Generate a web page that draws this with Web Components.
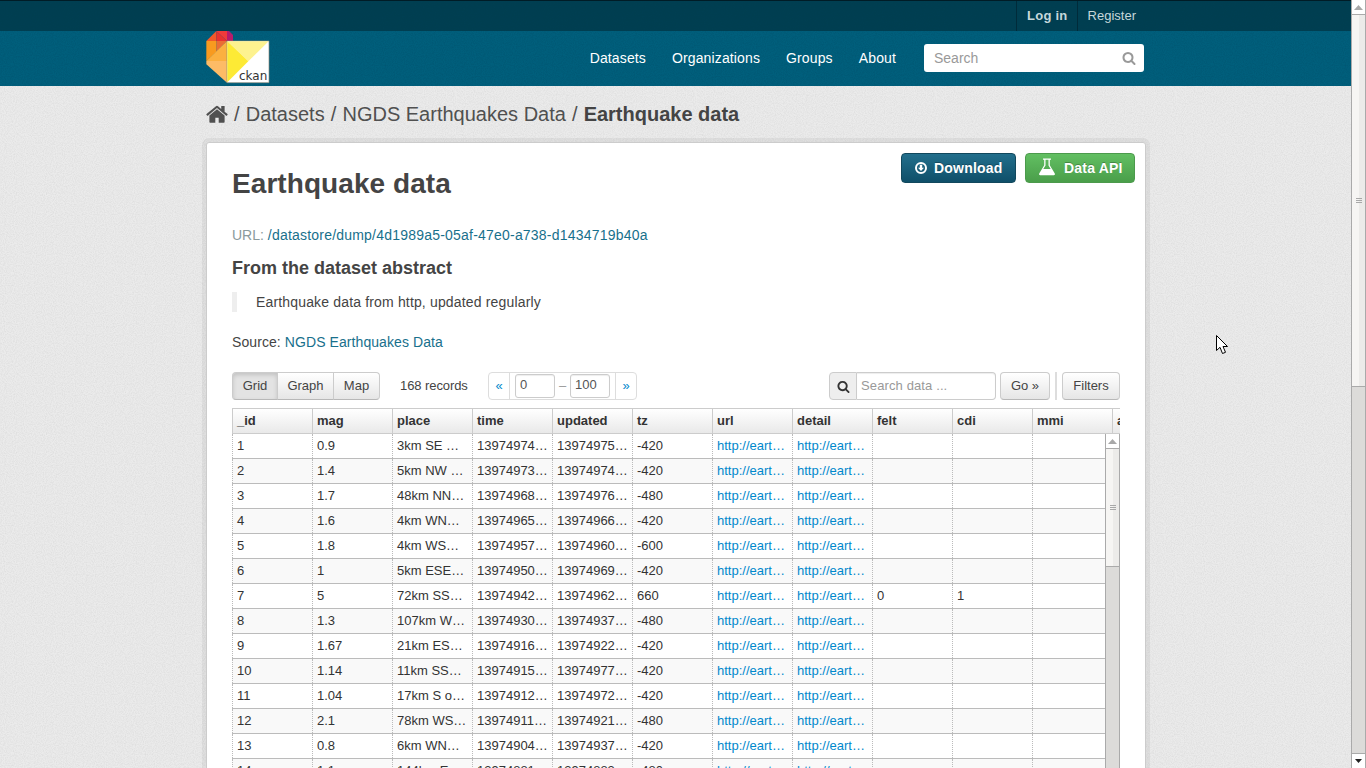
<!DOCTYPE html>
<html lang="en">
<head>
<meta charset="utf-8">
<title>Earthquake data</title>
<style>
html,body {margin:0; height:100%; overflow:hidden;}
body {
    font:14px/20px "Liberation Sans", Arial, sans-serif; color:#444;
    --noise:url("data:image/svg+xml,%3Csvg xmlns='http://www.w3.org/2000/svg' width='240' height='240'%3E%3Cfilter id='n'%3E%3CfeTurbulence type='fractalNoise' baseFrequency='.9' numOctaves='2'/%3E%3CfeColorMatrix values='0 0 0 0 .5 0 0 0 0 .5 0 0 0 0 .5 0 0 0 .5 -.17'/%3E%3C/filter%3E%3Crect width='240' height='240' filter='url(%23n)'/%3E%3C/svg%3E");
    --noise-dark:url("data:image/svg+xml,%3Csvg xmlns='http://www.w3.org/2000/svg' width='240' height='240'%3E%3Cfilter id='n'%3E%3CfeTurbulence type='fractalNoise' baseFrequency='.9' numOctaves='2'/%3E%3CfeColorMatrix values='0 0 0 0 0 0 0 0 0 .05 0 0 0 0 .1 0 0 0 .4 -.12'/%3E%3C/filter%3E%3Crect width='240' height='240' filter='url(%23n)'/%3E%3C/svg%3E");
}
</style>
</head>
<body>
<page-shell>
    <account-bar></account-bar>
    <site-nav></site-nav>
    <bread-crumbs></bread-crumbs>
    <resource-panel>
        <recline-toolbar></recline-toolbar>
        <recline-grid></recline-grid>
    </resource-panel>
</page-shell>
<script>
const ICON = {
    home: `<svg viewBox="0 128 1664 1408" fill="currentColor"><path d="M1408 992v480q0 26-19 45t-45 19h-384v-384h-256v384h-384q-26 0-45-19t-19-45v-480q0-1 .5-3t.5-3l575-474 575 474q1 2 1 6zm223-69l-62 74q-8 9-21 11h-3q-13 0-21-7l-692-577-692 577q-12 8-24 7-13-2-21-11l-62-74q-8-10-7-23.500t11-21.500l719-599q32-26 76-26t76 26l244 204v-195q0-14 9-23t23-9h192q14 0 23 9t9 23v408l219 182q10 8 11 21.500t-7 23.500z"/></svg>`,
    search: `<svg viewBox="0 0 1792 1792" fill="currentColor"><path d="M1216 832q0-185-131.500-316.500t-316.500-131.500-316.500 131.500-131.500 316.500 131.500 316.500 316.500 131.500 316.500-131.500 131.500-316.500zm512 832q0 52-38 90t-90 38q-54 0-90-38l-343-342q-179 124-399 124-143 0-273.500-55.500t-225-150-150-225-55.500-273.500 55.500-273.500 150-225 225-150 273.500-55.500 273.500 55.500 225 150 150 225 55.500 273.500q0 220-124 399l343 343q37 37 37 90z"/></svg>`,
    download: `<svg viewBox="0 0 14 14"><circle cx="7" cy="7" r="5" fill="none" stroke="#fff" stroke-width="2"/><path d="M5.800 3.800h2.400v3h1.800L7 10 4 6.800h1.800z" fill="#fff"/></svg>`,
    flask: `<svg viewBox="0 0 18 18" fill="#fff"><path d="M5 .5h8v1.300h-1.200v5.400l5 8.300q.7 1.600-1 1.800H2.200q-1.700-.2-1-1.800l5-8.300V1.800H5zM7.500 1.800v5.700L5.300 11h7.400l-2.200-3.500V1.800z"/></svg>`
};

class PageShell extends HTMLElement {
    constructor() {
        super();
        this.attachShadow({ mode: 'open' }).innerHTML = `<style>
        :host {display:flex; height:768px; overflow:hidden; position:relative;}
        main {
            flex:1; min-width:0; overflow:hidden;
            background:#ebebeb var(--noise);
        }
        .cursor {position:absolute; left:1215.500px; top:334.500px;}
        </style>
        <main><slot></slot></main>
        <fake-scroll thumb="14,372"></fake-scroll>
        <svg class="cursor" width="13" height="20"><path d="M.5.500V15.500L4 12.300 6.500 18.500 9.500 17.300 7 11.500H11.500z" fill="#fff" stroke="#000"/></svg>`;
    }
}

// scrollbar drawn by hand, the page itself never scrolls
class FakeScroll extends HTMLElement {
    constructor() {
        super();
        const height = this.getAttribute('thumb').split(',')[1];
        this.attachShadow({ mode: 'open' }).innerHTML = `<style>
        :host {
            display:flex; flex-direction:column; width:15px; box-sizing:border-box;
            border-left:1px solid #aaa; border-right:1px solid #aaa; background:#dcdbd9;
            flex:none;
        }
        .btn {height:14px; flex:none; background:#fff; display:flex; align-items:center; justify-content:center;}
        .btn.up {border-bottom:1px solid #aaa; height:14px;}
        .btn.down {border-top:1px solid #aaa; margin-top:auto; height:14px;}
        .thumb {
            flex:none; box-sizing:border-box; display:flex; flex-direction:column; gap:1px; align-items:center; justify-content:center;
            background:linear-gradient(90deg,#f6f5f3 55%,#ecebe9 55%);
            border-bottom:1px solid #aaa;
        }
        .thumb i {display:block; width:6px; height:1px; background:#a8a8a8;}
        </style>
        <div class="btn up"><svg width="9" height="5"><path d="M4.500 0L9 5H0z" fill="#a8a8a8"/></svg></div>
        <div class="thumb" style="height:${height}px"><i></i><i></i><i></i></div>
        <div class="btn down"><svg width="7" height="4"><path d="M0 0H7L3.500 4z" fill="#222"/></svg></div>`;
    }
}

class AccountBar extends HTMLElement {
    constructor() {
        super();
        this.attachShadow({ mode: 'open' }).innerHTML = `<style>
        :host {
            display:flex; justify-content:flex-end; height:30px;
            border-top:1px solid #001c26;
            background:#003e50 var(--noise-dark);
            padding-right:205px;
            font-size:13px; line-height:30px;
        }
        a {padding:0 10px; color:#c6d7db; text-decoration:none;}
        a.login {font-weight:bold; letter-spacing:.25px; border:solid #002b3a; border-width:0 1px; padding-right:9px;}
        </style>
        <a class="login" href="#">Log in</a><a href="#">Register</a>`;
    }
}

class SiteNav extends HTMLElement {
    constructor() {
        super();
        this.attachShadow({ mode: 'open' }).innerHTML = `<style>
        :host {
            display:flex; align-items:center; height:55px; box-sizing:border-box;
            background:#005f7c var(--noise-dark);
            padding:0 207px 2px 206px;
        }
        svg.logo {width:64px; height:53px; display:block; flex:none; align-self:flex-start;}
        nav {display:flex; gap:26px; margin-left:auto; margin-right:28px; letter-spacing:.13px;}
        a {color:#fff; text-decoration:none;}
        label {
            width:220px; height:28px; box-sizing:border-box; background:#fff; border-radius:3px;
            display:flex; align-items:center; justify-content:space-between; padding:0 8px 0 10px;
            color:#999;
        }
        label svg {width:14px; height:14px; color:#999;}
        </style>
        <svg class="logo" viewBox="49 95 192 159">
            <path d="M80 95L50 125H80z" fill="#f0592a"/>
            <path d="M80 95L112 125H80z" fill="#e8322f"/>
            <path d="M80 95H112V125z" fill="#f03b3a"/>
            <path d="M112 95H118L130 107V125H112z" fill="#b81c6b"/>
            <path d="M80 125H112L80 157z" fill="#ea6d35"/>
            <path d="M50 125H80V157L50 185z" fill="#f89a1f"/>
            <path d="M112 125V185H50z" fill="#fbb040"/>
            <path d="M50 185H112V250L50 195z" fill="#fdbb66"/>
            <path d="M112 125H238V250H112z" fill="#fff" stroke="#8a8a7a" stroke-width="2"/>
            <path d="M113 126H237L176 186z" fill="#fdf28f"/>
            <path d="M113 126L176 186 113 249z" fill="#fdea35"/>
            <text x="148" y="243" font-family="DejaVu Sans" font-size="36" fill="#333">ckan</text>
        </svg>
        <nav><a href="#">Datasets</a><a href="#">Organizations</a><a href="#">Groups</a><a href="#">About</a></nav>
        <label>Search${ICON.search}</label>`;
    }
}

class BreadCrumbs extends HTMLElement {
    constructor() {
        super();
        this.attachShadow({ mode: 'open' }).innerHTML = `<style>
        :host {
            display:flex; align-items:center; gap:6.100px; height:56px; box-sizing:border-box;
            padding-left:206px; font-size:20px; color:#505050;
        }
        svg {width:22px; height:19px; display:block; margin-top:-2px; color:#505050;}
        a {color:inherit; text-decoration:none;}
        b {color:#444;}
        </style>
        <a href="#">${ICON.home}</a><span>/</span><a href="#">Datasets</a><span>/</span><a href="#">NGDS Earthquakes Data</a><span>/</span><b>Earthquake data</b>`;
    }
}

class ResourcePanel extends HTMLElement {
    constructor() {
        super();
        this.attachShadow({ mode: 'open' }).innerHTML = `<style>
        :host {
            display:block; width:940px; height:800px; box-sizing:border-box; margin-left:206px;
            background:#fff; border:1px solid #ccc; border-radius:3px 3px 0 0;
            box-shadow:0 0 0 4px rgba(0,0,0,.05);
        }
        header {display:flex; justify-content:space-between; padding:10px 10px 0 25px;}
        h1 {margin:16px 0 0; font-size:28px; line-height:30px; color:#444; letter-spacing:.07px;}
        .acts {display:flex; gap:9px;}
        .btn {
            height:30px; box-sizing:border-box; border-radius:4px; color:#fff; font-weight:bold; font-size:14px; letter-spacing:.2px;
            display:flex; align-items:center; text-decoration:none; text-shadow:0 -1px 0 rgba(0,0,0,.25);
        }
        .dl {width:115px; padding-left:12px; gap:6px; background:linear-gradient(#236f8c,#0f4f69); border:1px solid #12485d;}
        .api {width:110px; padding-left:12px; gap:8px; background:linear-gradient(#62bf62,#4a9e4a); border:1px solid #4c9a4c;}
        .dl svg {width:14px; height:14px;}
        .api svg {width:18px; height:18px; margin-top:-3px;}
        .body {padding:0 25px 0 25px;}
        .url {margin:26px 0 0; color:#8b9a9c;}
        .url a {letter-spacing:.21px;}
        a {color:#18708c; text-decoration:none;}
        h2 {margin:11px 0 0; font-size:18px; line-height:24px; color:#444;}
        blockquote {margin:12px 0 0; border-left:5px solid #eee; padding:0 0 0 19px; line-height:20px; color:#444; letter-spacing:.16px;}
        .src {margin:20px 0 0; color:#444; letter-spacing:.08px;}
        .table {margin-top:20px;}
        </style>
        <header>
            <h1>Earthquake data</h1>
            <div class="acts">
                <a class="btn dl" href="#">${ICON.download}Download</a>
                <a class="btn api" href="#">${ICON.flask}Data API</a>
            </div>
        </header>
        <div class="body">
            <p class="url">URL: <a href="#">/datastore/dump/4d1989a5-05af-47e0-a738-d1434719b40a</a></p>
            <h2>From the dataset abstract</h2>
            <blockquote>Earthquake data from http, updated regularly</blockquote>
            <p class="src">Source: <a href="#">NGDS Earthquakes Data</a></p>
            <div class="table"><slot></slot></div>
        </div>`;
    }
}

class ReclineToolbar extends HTMLElement {
    constructor() {
        super();
        this.attachShadow({ mode: 'open' }).innerHTML = `<style>
        :host {display:flex; align-items:center; height:28px; margin-top:0; font-size:13px; color:#444;}
        .btn {
            height:28px; box-sizing:border-box; display:flex; align-items:center; justify-content:center;
            border:1px solid #ccc; border-bottom-color:#b8b8b8; background:linear-gradient(#fff,#e6e6e6); color:#444; border-radius:4px;
        }
        .views {display:flex;}
        .views .btn {border-radius:0; margin-left:-1px;}
        .views .btn:first-child {width:46px; margin-left:0; border-radius:4px 0 0 4px; background:#e3e3e3; box-shadow:inset 0 2px 4px rgba(0,0,0,.15);}
        .views .btn:nth-child(2) {width:57px;}
        .views .btn:last-child {width:47px; border-radius:0 4px 4px 0;}
        .count {margin-left:20px; width:88px; letter-spacing:-.08px;}
        .pager {display:flex; width:149px; height:28px; box-sizing:border-box; border:1px solid #ddd; border-radius:4px; color:#08c; align-items:center;}
        .pager span {width:20px; text-align:center; flex:none;}
        .pager .mid {
            flex:1; height:100%; border:solid #ddd; border-width:0 1px; display:flex; align-items:center; justify-content:center; gap:4px; color:#999;
        }
        .pager .inp {
            width:40px; height:24px; box-sizing:border-box; border:1px solid #ccc; border-radius:3px; padding:0 4px;
            color:#555; line-height:20px; box-shadow:inset 0 1px 1px rgba(0,0,0,.075);
        }
        .right {display:flex; align-items:center; margin-left:auto;}
        .find {display:flex; height:28px;}
        .find i {
            width:28px; box-sizing:border-box; background:#eee; border:1px solid #ccc; border-radius:4px 0 0 4px; border-right:1px solid #ccc;
            display:flex; align-items:center; justify-content:center; color:#333;
        }
        .find i svg {width:13px; height:13px;}
        .find div {
            width:139px; box-sizing:border-box; border:1px solid #ccc; border-left:0; border-radius:0 4px 4px 0; padding-left:4px;
            color:#999; line-height:26px; box-shadow:inset 0 1px 1px rgba(0,0,0,.075); letter-spacing:.12px;
        }
        .go {width:50px; margin-left:4px;}
        .sep {width:2px; height:28px; background:#ddd; margin:0 5px;}
        .filters {width:58px;}
        </style>
        <div class="views"><div class="btn">Grid</div><div class="btn">Graph</div><div class="btn">Map</div></div>
        <div class="count">168 records</div>
        <div class="pager"><span>«</span><div class="mid"><div class="inp">0</div>–<div class="inp">100</div></div><span>»</span></div>
        <div class="right">
            <div class="find"><i>${ICON.search}</i><div>Search data ...</div></div>
            <div class="btn go">Go »</div><div class="sep"></div><div class="btn filters">Filters</div>
        </div>`;
    }
}

const COLS = ['_id', 'mag', 'place', 'time', 'updated', 'tz', 'url', 'detail', 'felt', 'cdi', 'mmi', 'alert'];
const ROWS = [
    [1, '0.9', '3km SE …', '13974974…', '13974975…', '-420'],
    [2, '1.4', '5km NW …', '13974973…', '13974974…', '-420'],
    [3, '1.7', '48km NN…', '13974968…', '13974976…', '-480'],
    [4, '1.6', '4km WN…', '13974965…', '13974966…', '-420'],
    [5, '1.8', '4km WS…', '13974957…', '13974960…', '-600'],
    [6, '1', '5km ESE…', '13974950…', '13974969…', '-420'],
    [7, '5', '72km SS…', '13974942…', '13974962…', '660', '0', '1'],
    [8, '1.3', '107km W…', '13974930…', '13974937…', '-480'],
    [9, '1.67', '21km ES…', '13974916…', '13974922…', '-420'],
    [10, '1.14', '11km SS…', '13974915…', '13974977…', '-420'],
    [11, '1.04', '17km S o…', '13974912…', '13974972…', '-420'],
    [12, '2.1', '78km WS…', '13974911…', '13974921…', '-480'],
    [13, '0.8', '6km WN…', '13974904…', '13974937…', '-420'],
    [14, '1.1', '144km E…', '13974881…', '13974883…', '-480']
];

class ReclineGrid extends HTMLElement {
    constructor() {
        super();
        const link = '<a href="#">http://eart…</a>';
        const cell = v => `<div class="c">${v ?? ''}</div>`;
        const rows = ROWS.map(([a, b, c, d, e, f, felt, cdi]) =>
            `<div class="r">${[a, b, c, d, e, f, link, link, felt, cdi, ''].map(cell).join('')}</div>`).join('');
        this.attachShadow({ mode: 'open' }).innerHTML = `<style>
        :host {display:block; margin-top:8px; width:888px; overflow:hidden; font-size:13px; color:#333;}
        .head {display:flex; height:26px; box-sizing:border-box; border:solid #ccc; border-width:1px 0; background:linear-gradient(#fff,#e9e9e9); font-weight:bold;}
        .head div {flex:none; width:80px; box-sizing:border-box; border-left:1px solid #ccc; padding-left:4px; line-height:24px;}
        .body {display:flex; height:400px;}
        .rows {width:873px; overflow:hidden; flex:none;}
        .r {display:flex; height:25px; box-sizing:border-box; border-bottom:1px solid #bbb;}
        .r:nth-child(even) {background:#f9f9f9;}
        .c {flex:none; width:80px; box-sizing:border-box; border-left:1px dotted #bbb; padding-left:4px; line-height:24px; white-space:nowrap; overflow:hidden;}
        a {color:#08c; text-decoration:none;}
        </style>
        <div class="head">${COLS.map(c => `<div>${c}</div>`).join('')}</div>
        <div class="body"><div class="rows">${rows}</div><fake-scroll thumb="14,118"></fake-scroll></div>`;
    }
}

customElements.define('fake-scroll', FakeScroll);
customElements.define('account-bar', AccountBar);
customElements.define('site-nav', SiteNav);
customElements.define('bread-crumbs', BreadCrumbs);
customElements.define('recline-toolbar', ReclineToolbar);
customElements.define('recline-grid', ReclineGrid);
customElements.define('resource-panel', ResourcePanel);
customElements.define('page-shell', PageShell);
</script>
</body>
</html>
